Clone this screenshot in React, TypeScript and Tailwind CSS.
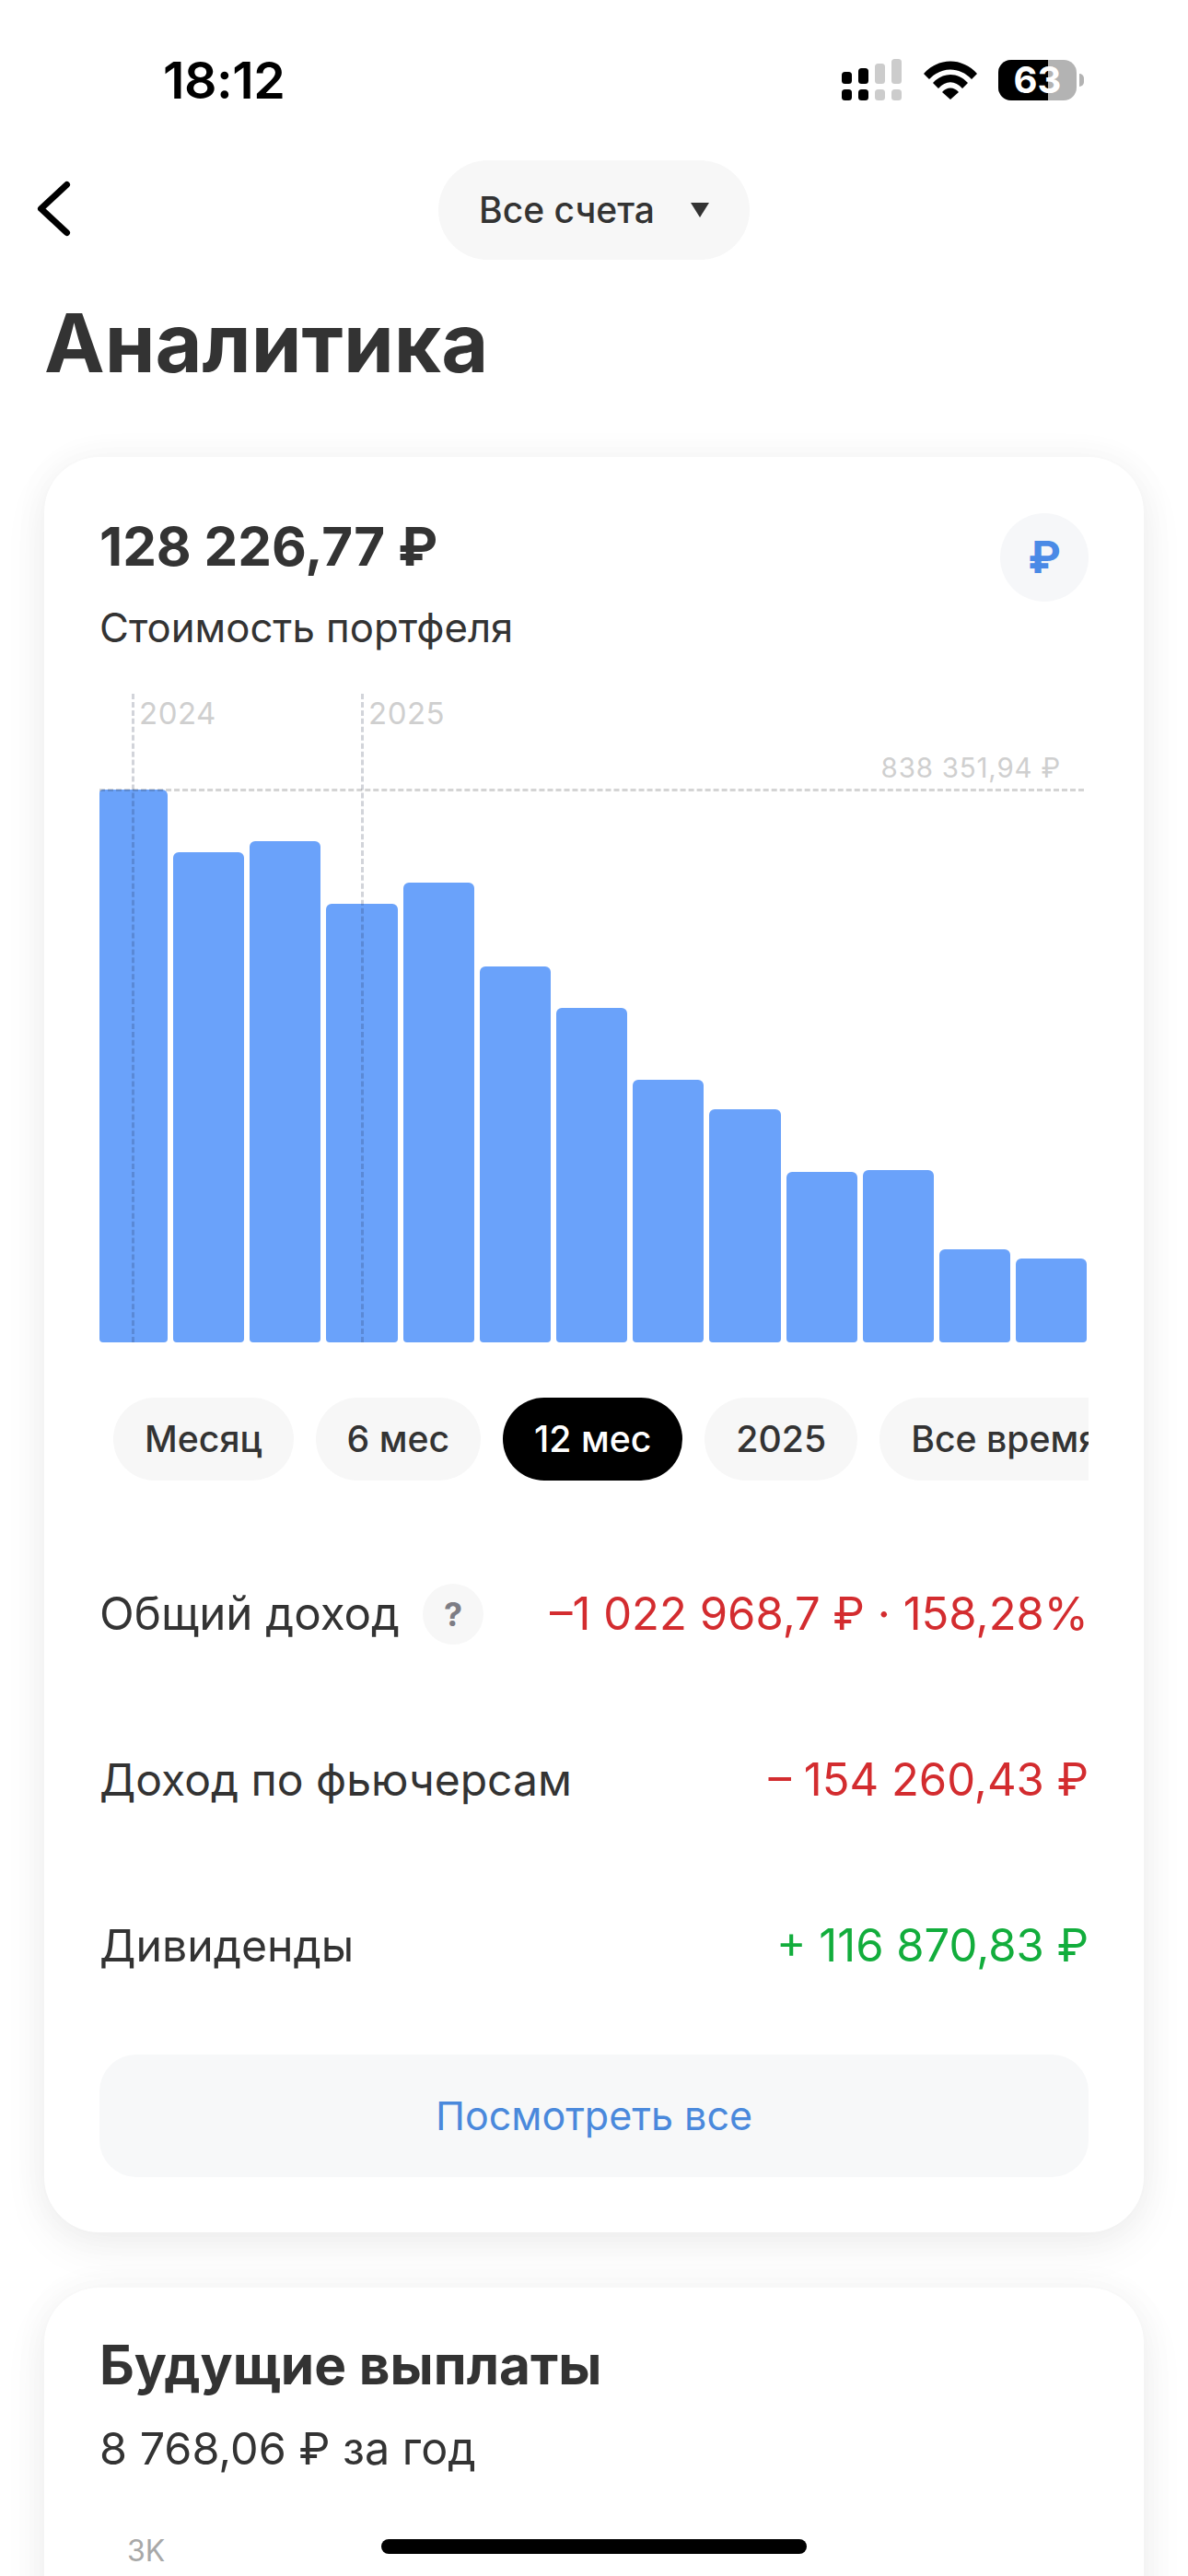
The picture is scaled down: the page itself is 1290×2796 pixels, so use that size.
import React from 'react';

const bars = [600, 532, 544, 476, 499, 408, 363, 285, 253, 185, 187, 101, 91];
const ranges = ['Месяц', '6 мес', '12 мес', '2025', 'Все время'];

const rows = [
  { label: 'Общий доход', size: 'text-[49.3px]', value: '–1 022 968,7 ₽ · 158,28%', color: 'text-[#d32c2f]', hint: true },
  { label: 'Доход по фьючерсам', size: 'text-[48px]', value: '– 154 260,43 ₽', color: 'text-[#d32c2f]', hint: false },
  { label: 'Дивиденды', size: 'text-[48.2px]', value: '+ 116 870,83 ₽', color: 'text-[#12ad3c]', hint: false },
];

const cardShadow = 'shadow-[0_16px_50px_rgba(0,0,0,0.06),0_0_40px_rgba(0,0,0,0.04)]';

const StatusBar: React.FC = () => (
  <div className="flex h-[174px] items-center justify-between pl-[177px] pr-[113px] text-black">
    <span className="text-[55.5px] font-semibold leading-none tracking-[-0.5px]">18:12</span>
    <div className="flex items-center gap-[23px]">
      <svg width="66" height="46" viewBox="0 0 66 46" className="block">
        <rect x="0" y="14" width="11" height="13" rx="3.5" fill="#000" />
        <rect x="18" y="10" width="11" height="17" rx="3.5" fill="#000" />
        <rect x="36" y="5" width="11" height="22" rx="3.5" fill="#ccc" />
        <rect x="54" y="0" width="11" height="27" rx="3.5" fill="#ccc" />
        <rect x="0" y="33" width="11" height="12" rx="3.5" fill="#000" />
        <rect x="18" y="33" width="11" height="12" rx="3.5" fill="#000" />
        <rect x="36" y="33" width="11" height="12" rx="3.5" fill="#ccc" />
        <rect x="54" y="33" width="11" height="12" rx="3.5" fill="#ccc" />
      </svg>
      <svg width="58" height="42" viewBox="0 0 58 42" className="block">
        <path d="M0 14 C16 -4 42 -4 58 14 L52 20 C39 6 19 6 6 20 Z" fill="#000" />
        <path d="M10 24 C21 12 37 12 48 24 L42 30 C34 21 24 21 16 30 Z" fill="#000" />
        <path d="M20 34 C25 28 33 28 38 34 L29 42 Z" fill="#000" />
      </svg>
      <div className="relative flex items-center">
        <div className="relative flex h-[44px] w-[85px] items-center justify-center rounded-[14px] bg-[#b3b3b3]">
          <div className="absolute inset-y-0 left-0 w-[54px] rounded-l-[14px] bg-black" />
          <span className="relative text-[40px] font-bold leading-[44px] text-white">63</span>
        </div>
        <div className="ml-[3px] h-[14px] w-[5px] rounded-r-full bg-[#b3b3b3]" />
      </div>
    </div>
  </div>
);

const PortfolioCard: React.FC = () => (
  <div className={`mx-[48px] rounded-[60px] bg-white px-[60px] pb-[60px] pt-[61px] ${cardShadow}`}>
    <div className="flex items-start justify-between">
      <div>
        <div className="text-[58.3px] font-bold leading-[72px] text-[#333]">128 226,77 ₽</div>
        <div className="mt-[26px] text-[43.7px] leading-[54px] text-[#333]">Стоимость портфеля</div>
      </div>
      <div className="flex h-[96px] w-[96px] items-center justify-center rounded-full bg-[#f6f7f9] text-[48px] font-bold text-[#4a8ae6]">
        ₽
      </div>
    </div>

    {/* chart */}
    <div className="relative mt-[41px] h-[707px] w-[1074px]">
      <div className="absolute left-[35px] top-[3px] bottom-0 z-10 border-l-[3px] border-dashed border-[#1c2a44]/20" />
      <div className="absolute left-[284px] top-[3px] bottom-0 z-10 border-l-[3px] border-dashed border-[#1c2a44]/20" />
      <span className="absolute left-[43px] top-[4px] text-[33px] leading-[40px] tracking-[0.5px] text-[#cfcfcf]">2024</span>
      <span className="absolute left-[292px] top-[4px] text-[33px] leading-[40px] tracking-[0.5px] text-[#cfcfcf]">2025</span>
      <span className="absolute right-[30px] top-[64px] text-[29.5px] leading-[38px] tracking-[0.8px] text-[#cfcfcf]">838 351,94 ₽</span>
      <div className="absolute left-0 right-[5px] top-[106px] z-10 border-t-[3px] border-dashed border-[#2a2a2a]/20" />
      <div className="flex h-full items-end gap-[6px] overflow-hidden">
        {bars.map((h, i) => (
          <div
            key={i}
            className={`shrink-0 rounded-t-[6px] rounded-b-[4px] bg-[#6aa2fa] ${i === 0 ? 'w-[74px] rounded-tl-[4px]' : 'w-[77.2px]'}`}
            style={{ height: h }}
          />
        ))}
      </div>
    </div>

    {/* period pills */}
    <div className="mt-[60px] flex gap-[24px] overflow-hidden pl-[15px]">
      {ranges.map((r) => (
        <div
          key={r}
          className={`flex h-[90px] shrink-0 items-center rounded-full px-[34px] text-[39.2px] font-medium ${
            r === '12 мес' ? 'bg-black text-white' : 'bg-[#f7f7f7] text-[#333]'
          }`}
        >
          {r}
        </div>
      ))}
    </div>

    {/* totals */}
    <div className="mt-[55px] flex flex-col">
      {rows.map((row) => (
        <div key={row.label} className="flex h-[180px] items-center justify-between whitespace-nowrap">
          <div className={`flex items-center gap-[25px] text-[#333] ${row.size}`}>
            {row.label}
            {row.hint && (
              <span className="flex h-[66px] w-[66px] items-center justify-center rounded-full bg-[#f7f7f7] text-[36px] font-bold text-[#7d7d85]">?</span>
            )}
          </div>
          <div className={`text-[49px] ${row.color}`}>{row.value}</div>
        </div>
      ))}
    </div>

    <div className="mt-[28px] flex h-[133px] items-center justify-center rounded-[40px] bg-[#f7f8f9] text-[43px] text-[#4a89dc]">
      Посмотреть все
    </div>
  </div>
);

const PayoutsCard: React.FC = () => (
  <div className={`mx-[48px] mt-[60px] h-[400px] rounded-t-[60px] bg-white px-[60px] pt-[48px] ${cardShadow}`}>
    <div className="text-[58.5px] font-bold leading-[72px] text-[#333]">Будущие выплаты</div>
    <div className="mt-[25px] text-[48.5px] leading-[60px] text-[#333]">8 768,06 ₽ за год</div>
    <div className="ml-[30px] mt-[61px] text-[32px] leading-[40px] text-[#a8a8a8]">3K</div>
  </div>
);

export default function App() {
  return (
    <div className="relative h-[2796px] w-[1290px] overflow-hidden bg-white font-['Inter',sans-serif]">
      <StatusBar />
      <div className="relative flex h-[108px] items-center justify-center">
        <svg width="44" height="68" viewBox="0 0 44 68" fill="none" className="absolute left-[36px] top-[19px]">
          <path d="M36.5 7.5 L8.5 33.5 L36.5 59.5" stroke="#000" strokeWidth="7" strokeLinecap="round" strokeLinejoin="round" />
        </svg>
        <div className="flex h-[108px] w-[338px] items-center justify-center gap-[39px] rounded-full bg-[#f7f7f7] text-[39px] font-medium text-[#333]">
          Все счета
          <span className="h-0 w-0 border-x-[10.5px] border-t-[16px] border-x-transparent border-t-[#333]" />
        </div>
      </div>
      <h1 className="ml-[48px] mt-[35px] text-[88px] font-bold leading-[110px] text-[#333]">Аналитика</h1>
      <div className="mt-[69px]">
        <PortfolioCard />
        <PayoutsCard />
      </div>
      <div className="absolute bottom-[24px] left-[414px] h-[16px] w-[462px] rounded-full bg-black" />
    </div>
  );
}
